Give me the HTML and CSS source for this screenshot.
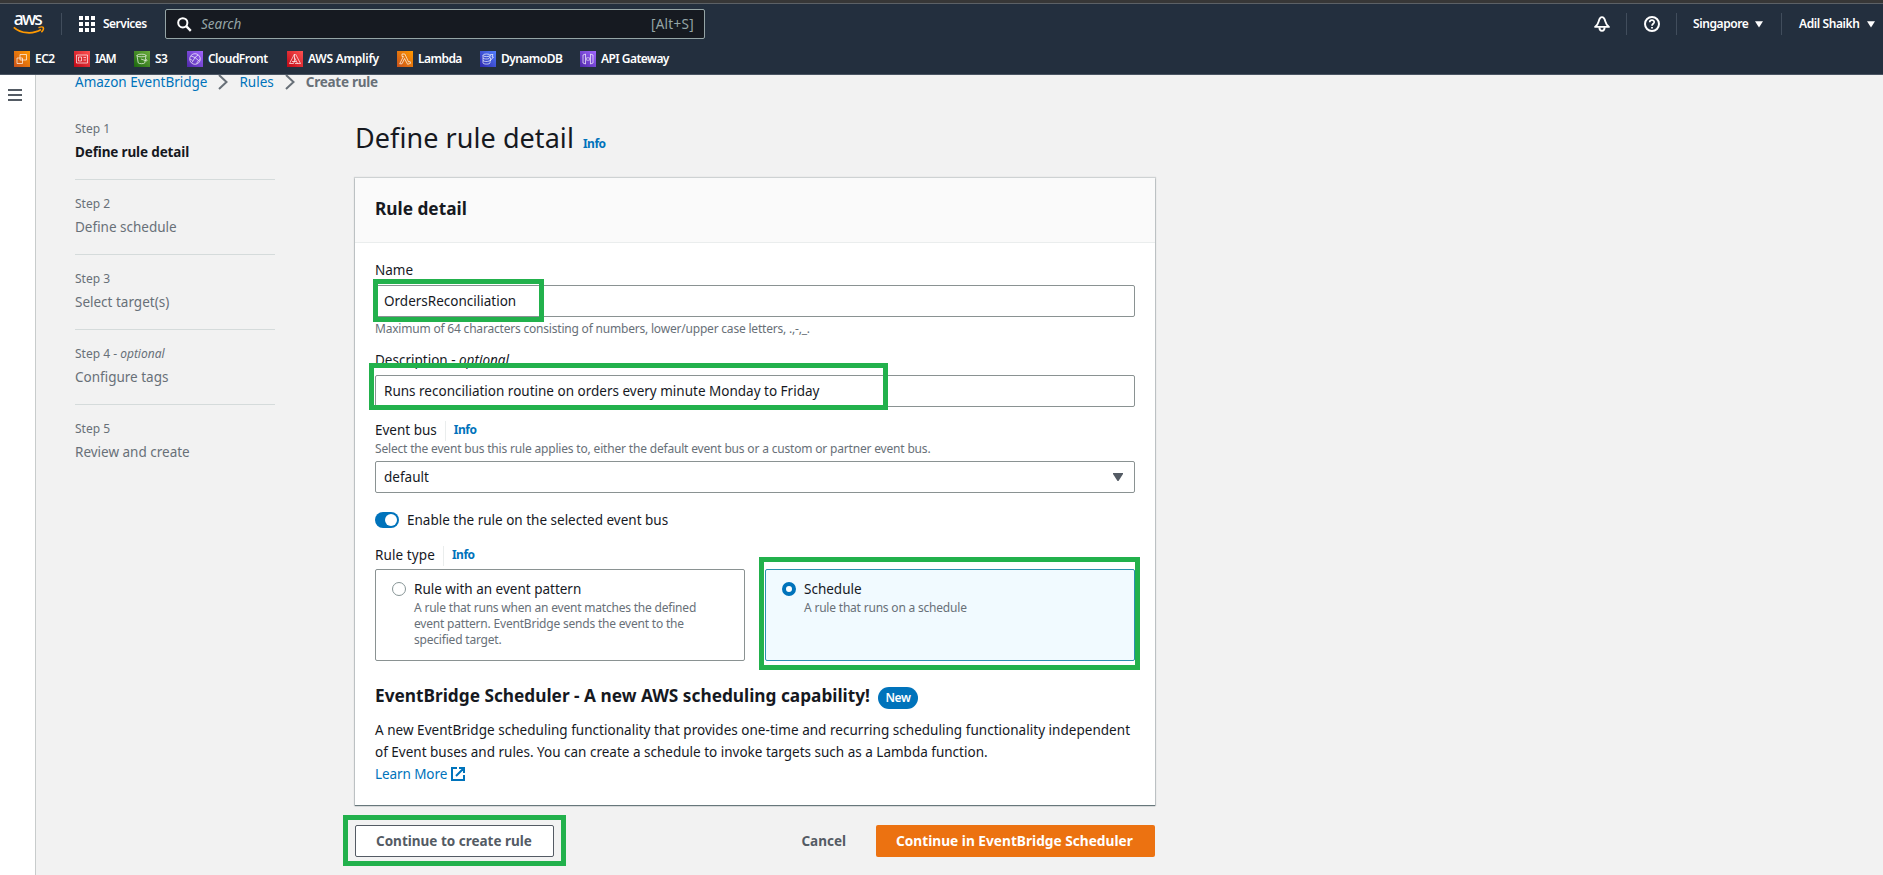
FILE: index.html
```html
<!DOCTYPE html>
<html lang="en">
<head>
<meta charset="utf-8">
<title>Define rule detail</title>
<link rel="stylesheet" href="styles.css">
</head>
<body>
<header class="topbar">
  <div class="topbar-main">
    <svg class="logo" width="32" height="22" viewBox="0 0 32 22"><text x="0.8" y="12" class="logo-text" textLength="29">aws</text><path d="M.8 14.300C8 20.800 20 21.500 28 16.500" fill="none" stroke="#f90" stroke-width="1.800"/><path d="M25.500 14.700c2-.8 4.300-.9 4.800-.2.4.8-.4 3.200-1.900 4.800" fill="none" stroke="#f90" stroke-width="1.500"/></svg>
    <span class="vline logo-line"></span>
    <svg class="grid-icon" width="16" height="16" viewBox="0 0 16 16" fill="#fff"><path d="M0 0h4v4H0zM6 0h4v4H6zM12 0h4v4h-4zM0 6h4v4H0zM6 6h4v4H6zM12 6h4v4h-4zM0 12h4v4H0zM6 12h4v4H6zM12 12h4v4h-4z"/></svg>
    <span class="nav-text services">Services</span>
    <div class="search">
      <svg width="15" height="15" viewBox="0 0 15 15" fill="none" stroke="#fff"><circle cx="5.800" cy="5.800" r="4.600" stroke-width="2"/><path d="M9.200 9.200l4.600 4.600" stroke-width="2.400"/></svg>
      <span class="search-hint">Search</span>
      <span class="search-key">[Alt+S]</span>
    </div>
    <div class="topbar-right">
      <svg class="bell" width="16" height="16" viewBox="0 0 16 16" fill="none" stroke="#fff" stroke-width="1.900" stroke-linejoin="round"><path d="M8 1.100C6.200 1.100 5.300 2.800 4.700 5.400 4.100 7.900 3 9.300 1.100 10.900h13.800C13 9.300 11.900 7.900 11.300 5.400 10.700 2.800 9.800 1.100 8 1.100z"/><path d="M5.400 11.300C5.400 16 10.600 16 10.600 11.300"/></svg>
      <span class="vline l1"></span>
      <svg class="help" width="16" height="16" viewBox="0 0 16 16" fill="none" stroke="#fff"><circle cx="8" cy="8" r="7" stroke-width="2"/><path d="M5.700 6.300C5.700 3.300 10.300 3.400 10.200 6.200 10.100 7.800 8 7.800 8 9.700" stroke-width="1.700"/><path d="M8 10.900v1.700" stroke-width="1.800"/></svg>
      <span class="vline l2"></span>
      <span class="nav-text region">Singapore</span>
      <svg class="caret" width="8" height="7" viewBox="0 0 8 7"><path d="M0 .3h8L4 6.600z" fill="#fff"/></svg>
      <span class="vline l3"></span>
      <span class="nav-text user">Adil Shaikh</span>
      <svg class="caret" width="8" height="7" viewBox="0 0 8 7"><path d="M0 .3h8L4 6.600z" fill="#fff"/></svg>
    </div>
  </div>
  <nav class="favorites">
    <a class="fav"><svg class="fav-icon orange" viewBox="0 0 16 16"><path d="M6 3.500h6.500V9H6zM3 7h5.500v5.500H3z"/></svg><span>EC2</span></a>
    <a class="fav iam"><svg class="fav-icon red" viewBox="0 0 16 16"><path d="M2.500 4h11v8h-11zM4.500 6h3v4h-3zM9.500 6.500h2.500M9.500 9h2.500"/></svg><span>IAM</span></a>
    <a class="fav"><svg class="fav-icon green" viewBox="0 0 16 16"><path d="M3 4.500c0-1.700 9-1.700 9 0s-9 1.700-9 0l1.200 7.300c.5 1.200 6.100 1.200 6.600 0L12 4.500M7 8l5 1.800c1.500.3 1.500-.8 0-1.500"/></svg><span>S3</span></a>
    <a class="fav"><svg class="fav-icon purple" viewBox="0 0 16 16"><circle cx="8" cy="8" r="5.300"/><path d="M4 5l4 1.500L11 4M8 6.500l-3 5M8 6.500l3.500 3M9.500 12.500l2-3 1.500-1M3 8l2.500 1.500"/></svg><span>CloudFront</span></a>
    <a class="fav amplify"><svg class="fav-icon red" viewBox="0 0 16 16"><path d="M7.500 3l-5 9.500h4L7.500 10zM8.500 3l5 9.500H8M7.500 6.500l3 6M5 10.500h4"/></svg><span>AWS Amplify</span></a>
    <a class="fav"><svg class="fav-icon orange" viewBox="0 0 16 16"><path d="M5 3h2.800l3.800 8 1.500-.5.500 1.800-3 1L7.500 7.500l-2.500 5.300H2.700l3.700-7.300H5z"/></svg><span>Lambda</span></a>
    <a class="fav"><svg class="fav-icon blue" viewBox="0 0 16 16"><ellipse cx="6.500" cy="4.300" rx="3.500" ry="1.300"/><path d="M3 4.300v7.500c0 1.700 7 1.700 7 0V9M3 7c1 1.200 4.500 1.300 6 .5M3 9.500c1 1.200 4.500 1.300 6 .5M10.500 3.500h2.500l-1 2.500h1.500L10 10l.8-3H9.500z"/></svg><span>DynamoDB</span></a>
    <a class="fav"><svg class="fav-icon purple" viewBox="0 0 16 16"><path d="M3 4l2.500-1v10L3 12zM13 4l-2.500-1v10l2.500-1zM7.300 6L6.500 8l.8 2M8.700 6l.8 2-.8 2"/></svg><span>API Gateway</span></a>
  </nav>
</header>

<div class="page">
  <aside class="rail"><svg width="14" height="12" viewBox="0 0 14 12" fill="#545b64"><path d="M0 0h14v2H0zM0 5h14v2H0zM0 10h14v2H0z"/></svg></aside>
  <div class="content">
    <nav class="breadcrumb">
      <a class="link">Amazon EventBridge</a>
      <svg width="10" height="16" viewBox="0 0 10 16"><path d="M1 1l7.500 7L1 15" fill="none" stroke="#687078" stroke-width="2"/></svg>
      <a class="link">Rules</a>
      <svg width="10" height="16" viewBox="0 0 10 16"><path d="M1 1l7.500 7L1 15" fill="none" stroke="#687078" stroke-width="2"/></svg>
      <span class="crumb-current">Create rule</span>
    </nav>
    <div class="columns">
      <ol class="steps">
        <li class="step"><div class="step-label">Step 1</div><div class="step-name active">Define rule detail</div></li>
        <li class="step"><div class="step-label">Step 2</div><div class="step-name">Define schedule</div></li>
        <li class="step"><div class="step-label">Step 3</div><div class="step-name">Select target(s)</div></li>
        <li class="step"><div class="step-label">Step 4 - <i>optional</i></div><div class="step-name">Configure tags</div></li>
        <li class="step"><div class="step-label">Step 5</div><div class="step-name">Review and create</div></li>
      </ol>
      <main class="main">
        <div class="title-row"><h1 class="title">Define rule detail</h1><a class="info">Info</a></div>
        <section class="card">
          <div class="card-head"><h2 class="h2">Rule detail</h2></div>
          <div class="card-body">
            <div class="field">
              <label class="label">Name</label>
              <div class="input">OrdersReconciliation</div>
              <div class="hint name-hint">Maximum of 64 characters consisting of numbers, lower/upper case letters, .,-,_.</div>
              <div class="mark mark-name"></div>
            </div>
            <div class="field description">
              <label class="label">Description - <i>optional</i></label>
              <div class="input">Runs reconciliation routine on orders every minute Monday to Friday</div>
              <div class="mark mark-description"></div>
            </div>
            <div class="field bus">
              <label class="label split"><span>Event bus</span><a class="info">Info</a></label>
              <div class="hint bus-hint">Select the event bus this rule applies to, either the default event bus or a custom or partner event bus.</div>
              <div class="input select"><span>default</span><svg width="10" height="8" viewBox="0 0 10 8"><path d="M0 0h10v1L5.500 8h-1L0 1z" fill="#545b64"/></svg></div>
            </div>
            <div class="toggle-row"><span class="toggle"><span class="knob"></span></span><span>Enable the rule on the selected event bus</span></div>
            <div class="field type">
              <label class="label split"><span class="type-label">Rule type</span><a class="info">Info</a></label>
              <div class="tiles">
                <div class="tile"><span class="radio"></span><div><div>Rule with an event pattern</div><div class="hint">A rule that runs when an event matches the defined<br>event pattern. EventBridge sends the event to the<br>specified target.</div></div></div>
                <div class="tile selected"><span class="radio"></span><div><div>Schedule</div><div class="hint">A rule that runs on a schedule</div></div><div class="mark mark-schedule"></div></div>
              </div>
            </div>
            <div class="promo-head"><h3 class="h3">EventBridge Scheduler - A new AWS scheduling capability!</h3><span class="badge">New</span></div>
            <p class="promo-text"><span class="promo-first">A new EventBridge scheduling functionality that provides one-time and recurring scheduling functionality independent</span><br>of Event buses and rules. You can create a schedule to invoke targets such as a Lambda function.<br><a class="link more"><span>Learn More</span><svg width="14" height="14" viewBox="0 0 14 14" fill="none" stroke="#0073bb" stroke-width="2"><path d="M6 1H1v12h12V8M8 1h5v5M13 1L5 9"/></svg></a></p>
          </div>
        </section>
        <div class="actions">
          <div class="btn secondary">Continue to create rule<div class="mark mark-button"></div></div>
          <div class="btn plain">Cancel</div>
          <div class="btn primary">Continue in EventBridge Scheduler</div>
        </div>
      </main>
    </div>
  </div>
</div>
</body>
</html>
```
FILE: styles.css
```css
* { box-sizing: border-box; }
body { margin: 0; height: 875px; overflow: hidden; background: #f2f2f2; color: #16191f; font-family: "Noto Sans", "Open Sans", sans-serif; font-size: 13.500px; line-height: 22px; }
h1, h2, h3, p, ol { margin: 0; padding: 0; }
svg { display: block; flex: none; }
.topbar { position: relative; z-index: 2; height: 75px; background: #232f3e; border-top: 3px solid #373737; border-bottom: 1px solid #4a5563; }
.topbar-main { display: flex; align-items: center; height: 41px; padding: 5px 8px 5px 13px; border-top: 1px solid #5c6166; }
.logo { overflow: visible; }
.logo-text { font: 500 17.500px "Noto Sans", sans-serif; fill: #fff; }
.vline { width: 1px; height: 22px; background: #414d5c; flex: none; }
.logo-line { margin: 0 17px 0 16px; }
.nav-text { font-size: 12px; font-weight: 600; letter-spacing: -.4px; color: #fff; white-space: nowrap; }
.services { width: 62px; margin-left: 8px; letter-spacing: -.5px; }
.search { display: flex; align-items: center; width: 540px; margin-right: 1px; height: 30px; padding: 0 10px 0 11px; background: #161a21; border: 1px solid #95a5a6; border-radius: 2px; color: #95a5a6; flex: none; }
.search-hint { margin-left: 9px; font-style: italic; }
.search-key { margin-left: auto; letter-spacing: .3px; }
.topbar-right { display: flex; align-items: center; margin-left: auto; }
.l1 { margin: 0 17px 0 16px; }
.l2 { margin: 0 16px; }
.l3 { margin: 0 17px 0 18px; }
.region { width: 62px; }
.user { width: 68px; }
.favorites { display: grid; grid-template-columns: 60px 60px 53px 100px 110px 83px 100px 110px; padding: 4px 0 0 14px; }
.fav { display: flex; align-items: center; gap: 5px; color: #fff; font-size: 12px; font-weight: 600; letter-spacing: -.55px; white-space: nowrap; }
.amplify { letter-spacing: -.25px; }
.iam { letter-spacing: -1px; }
.fav-icon { width: 16px; height: 16px; fill: none; stroke: #fff; stroke-opacity: .85; stroke-width: .8; }
.orange { background: linear-gradient(45deg, #c8511b, #f90); }
.red { background: linear-gradient(45deg, #bd0816, #ff5252); }
.green { background: linear-gradient(45deg, #1b660f, #6cae3e); }
.purple { background: linear-gradient(45deg, #4d27a8, #a166ff); }
.blue { background: linear-gradient(45deg, #2e27ad, #527fff); }
.page { display: flex; height: 800px; }
.rail { width: 36px; background: #fff; border-right: 1px solid #c8cccc; padding: 14px 0 0 8px; flex: none; }
.content { padding-left: 39px; }
.breadcrumb { display: flex; align-items: center; margin-top: -4px; height: 22px; gap: 11px; color: #687078; white-space: nowrap; }
.breadcrumb svg { margin-top: -1px; }
.link { color: #0073bb; }
.crumb-current { font-size: 13.500px; letter-spacing: -.26px; font-weight: 700; }
.columns { display: flex; gap: 80px; }
.steps { width: 200px; list-style: none; padding-top: 12px; color: #687078; }
.step { height: 75px; padding-top: 16px; border-bottom: 1px solid #d5dbdb; }
.step:last-child { border: 0; }
.step-label { font-size: 12px; line-height: 16px; margin-bottom: 4px; }
.active { color: #16191f; letter-spacing: -.14px; font-weight: 700; }
.main { width: 800px; padding-top: 26px; }
.title-row { display: flex; align-items: baseline; gap: 9px; height: 59px; }
.title { font-size: 27px; line-height: 37px; letter-spacing: .06px; font-weight: 400; white-space: nowrap; }
.info { color: #0073bb; font-size: 12px; letter-spacing: -.5px; font-weight: 700; }
.card { height: 627px; background: #fff; box-shadow: 0 1px 1px 0 rgba(0,28,36,.5), 0 0 1px 1px rgba(0,28,36,.15); }
.card-head { height: 65px; padding: 19px 20px; background: #fafafa; border-bottom: 1px solid #eaeded; }
.h2, .h3 { font-size: 17.250px; line-height: 23px; font-weight: 700; white-space: nowrap; }
.card-body { padding: 16px 20px 0; }
.field { position: relative; }
.label { display: block; margin-bottom: 4px; }
.input { display: flex; align-items: center; height: 32px; padding: 0 11px 0 8px; border: 1px solid #8a9292; border-radius: 2px; }
.hint { font-size: 12px; letter-spacing: -.2px; line-height: 16px; color: #687078; white-space: nowrap; }
.field > .hint { margin-top: 4px; }
.description { margin-top: 12px; }
.bus { margin-top: 12px; }
.split { display: flex; gap: 8px; margin: 0; }
.split .info { border-left: 1px solid #eaeded; padding-left: 8px; line-height: 18px; margin-top: 2px; }
.type-label { letter-spacing: .1px; }
.field > .bus-hint { margin: 0 0 4px; letter-spacing: -.18px; }
.select { justify-content: space-between; }
.toggle-row { display: flex; align-items: center; gap: 8px; margin-top: 16px; }
.toggle { width: 24px; height: 16px; padding: 2px; border-radius: 8px; background: #0073bb; display: flex; justify-content: flex-end; }
.knob { width: 12px; height: 12px; border-radius: 50%; background: #fff; }
.type { margin-top: 13px; }
.tiles { display: grid; grid-template-columns: 1fr 1fr; gap: 20px; margin-top: 3px; }
.tile { position: relative; display: flex; gap: 8px; height: 92px; padding: 8px 16px; border: 1px solid #8a9292; border-radius: 2px; }
.selected { border-color: #2a8faf; background: #f1faff; }
.radio { width: 14px; height: 14px; margin-top: 4px; border: 1px solid #879596; border-radius: 50%; background: #fff; flex: none; }
.selected .radio { border: 4px solid #0073bb; }
.promo-head { display: flex; gap: 8px; margin-top: 23px; height: 35px; }
.badge { width: 40px; height: 22px; margin-top: 3px; border-radius: 11px; background: #0073bb; color: #fff; font-size: 12px; letter-spacing: -.5px; font-weight: 600; text-align: center; }
.promo-text { white-space: nowrap; }
.promo-first { letter-spacing: .027px; }
.more { display: inline-flex; align-items: center; gap: 4px; letter-spacing: -.08px; }
.actions { display: flex; margin-top: 20px; }
.btn { position: relative; height: 32px; padding: 5px 20px; border-radius: 2px; font-weight: 700; white-space: nowrap; color: #545b64; }
.secondary { width: 199px; background: #fff; border: 1px solid #545b64; padding: 4px 20px; }
.plain { margin-left: auto; margin-right: 10px; }
.primary { width: 279px; background: #ec7211; color: #fff; font-size: 13.700px; }
.mark { position: absolute; border: 5px solid #22b14c; }
.mark-name { left: -2px; top: 20px; width: 171px; height: 43px; }
.mark-description { left: -6px; top: 14px; width: 519px; height: 47px; }
.mark-schedule { left: -7px; top: -13px; width: 381px; height: 113px; }
.mark-button { left: -13px; top: -11px; width: 223px; height: 51px; }
```
